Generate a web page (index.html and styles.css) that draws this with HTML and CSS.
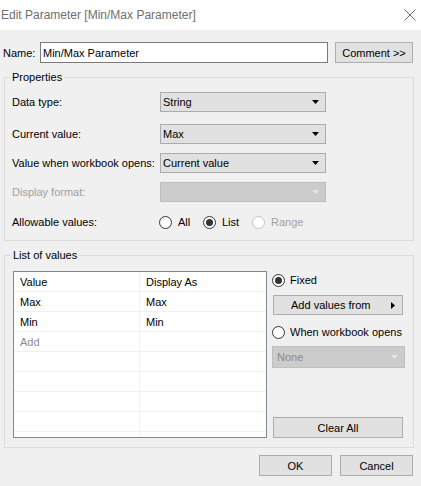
FILE: index.html
```html
<!DOCTYPE html>
<html lang="en">
<head>
<meta charset="utf-8">
<title>Edit Parameter</title>
<link rel="stylesheet" href="styles.css">
</head>
<body>
<div class="window">
  <div class="titlebar">
    <span class="title">Edit Parameter [Min/Max Parameter]</span>
    <svg class="close" width="12" height="12" viewBox="0 0 12 12"><path d="M0.5 0.5 L11.5 11.5 M11.5 0.5 L0.5 11.5" stroke="#6b6b6b" stroke-width="1" fill="none"/></svg>
  </div>
  <div class="content">
    <div class="name-row">
      <span class="name-label">Name:</span>
      <div class="text-input">Min/Max Parameter</div>
      <button class="btn comment">Comment &gt;&gt;</button>
    </div>

    <fieldset class="group props">
      <legend>Properties</legend>
      <div class="prop-list">
        <div class="prop-row">
          <span class="prop-label">Data type:</span>
          <div class="select"><span>String</span><svg width="7" height="4" viewBox="0 0 7 4"><polygon points="0,0 7,0 3.5,4" fill="#000"/></svg></div>
        </div>
        <div class="prop-row second">
          <span class="prop-label">Current value:</span>
          <div class="select"><span>Max</span><svg width="7" height="4" viewBox="0 0 7 4"><polygon points="0,0 7,0 3.5,4" fill="#000"/></svg></div>
        </div>
        <div class="prop-row">
          <span class="prop-label">Value when workbook opens:</span>
          <div class="select"><span>Current value</span><svg width="7" height="4" viewBox="0 0 7 4"><polygon points="0,0 7,0 3.5,4" fill="#000"/></svg></div>
        </div>
        <div class="prop-row">
          <span class="prop-label disabled">Display format:</span>
          <div class="select off"><span></span><svg width="7" height="4" viewBox="0 0 7 4"><polygon points="0,0 7,0 3.5,4" fill="#e6e6e6"/></svg></div>
        </div>
        <div class="prop-row last">
          <span class="prop-label">Allowable values:</span>
          <div class="radios">
            <span class="opt opt-all"><span class="radio"></span>All</span>
            <span class="opt opt-list"><span class="radio on"></span>List</span>
            <span class="opt disabled"><span class="radio off"></span>Range</span>
          </div>
        </div>
      </div>
    </fieldset>

    <fieldset class="group values">
      <legend>List of values</legend>
      <div class="values-body">
        <div class="grid">
          <div class="cell">Value</div><div class="cell">Display As</div>
          <div class="cell">Max</div><div class="cell">Max</div>
          <div class="cell">Min</div><div class="cell">Min</div>
          <div class="cell add">Add</div><div class="cell"></div>
          <div class="cell"></div><div class="cell"></div>
          <div class="cell"></div><div class="cell"></div>
          <div class="cell"></div><div class="cell"></div>
          <div class="cell"></div><div class="cell"></div>
          <div class="cell"></div><div class="cell"></div>
        </div>
        <div class="side">
          <span class="opt side-opt"><span class="radio on"></span>Fixed</span>
          <button class="btn side-btn addfrom"><span>Add values from</span><svg width="4" height="7" viewBox="0 0 4 7"><polygon points="0,0 4,3.5 0,7" fill="#000"/></svg></button>
          <span class="opt side-opt when"><span class="radio"></span>When workbook opens</span>
          <div class="select off none"><span>None</span><svg width="7" height="4" viewBox="0 0 7 4"><polygon points="0,0 7,0 3.5,4" fill="#e6e6e6"/></svg></div>
          <button class="btn side-btn clear">Clear All</button>
        </div>
      </div>
    </fieldset>

    <div class="footer">
      <button class="btn foot">OK</button>
      <button class="btn foot">Cancel</button>
    </div>
  </div>
</div>
</body>
</html>
```

FILE: styles.css
```css
* { box-sizing: border-box; }
html, body {
  margin: 0;
  padding: 0;
  background: #f0f0f0;
}
body {
  font-family: "Liberation Sans", Arial, sans-serif;
  font-size: 11px;
  color: #000;
}
.window {
  width: 421px;
  height: 486px;
  background: #f0f0f0;
  overflow: hidden;
}
.titlebar {
  height: 30px;
  background: #fff;
  display: flex;
  align-items: center;
  justify-content: space-between;
  padding: 0 5px 0 1px;
}
.title {
  font-size: 12px;
  color: #6f6f6f;
}
.close { display: block; margin-top: -1px; }

.name-row {
  display: flex;
  align-items: center;
  margin-top: 12px;
  height: 21px;
}
.name-label {
  width: 40px;
  padding-left: 3px;
}
.text-input {
  width: 288px;
  height: 21px;
  background: #fff;
  border: 1px solid #7a7a7a;
  padding-left: 2px;
  display: flex;
  align-items: center;
}
.btn {
  font-family: inherit;
  font-size: 11px;
  color: #000;
  background: #e1e1e1;
  border: 1px solid #adadad;
  border-radius: 0;
  padding: 0;
  margin: 0;
  display: flex;
  align-items: center;
  justify-content: center;
}
.comment {
  width: 78px;
  height: 21px;
  margin-left: 7px;
}

.group {
  margin: 7px 0 0 4px;
  width: 410px;
  border: 1px solid #dcdcdc;
  min-width: 0;
}
.group legend {
  line-height: 14px;
  padding: 0 2px;
  margin-left: -2px;
}
.props {
  padding: 8px 8px 8px 7px;
}
.prop-list {
  display: flex;
  flex-direction: column;
  gap: 9px;
}
.prop-row {
  display: flex;
  align-items: center;
  height: 20px;
}
.prop-row.second { margin-top: 3px; }
.prop-row.last { margin-top: 1px; }
.prop-label {
  width: 148px;
}
.disabled { color: #a0a0a0; }
.select {
  width: 166px;
  height: 20px;
  background: #e1e1e1;
  border: 1px solid #acacac;
  display: flex;
  align-items: center;
  justify-content: space-between;
  padding: 0 6px 0 2px;
}
.select svg { display: block; }
.select.off {
  background: #cccccc;
  border-color: #bfbfbf;
  color: #8a8a8a;
}
.radios {
  display: flex;
  align-items: center;
  margin-left: -1px;
}
.opt {
  display: flex;
  align-items: center;
  gap: 6px;
}
.opt-all { width: 44px; }
.opt-list { width: 49px; }
.radio {
  width: 13px;
  height: 13px;
  border-radius: 50%;
  border: 1px solid #333;
  background: #fff;
  display: inline-flex;
  align-items: center;
  justify-content: center;
  flex: none;
}
.radio.on::after {
  content: "";
  width: 7px;
  height: 7px;
  border-radius: 50%;
  background: #333;
}
.radio.off { border-color: #c2c2c2; }

.values {
  padding: 9px 8px 9px 8px;
}
.values-body {
  display: flex;
  gap: 5px;
}
.grid {
  width: 254px;
  height: 167px;
  background: #fff;
  border: 1px solid #828790;
  display: grid;
  grid-template-columns: 126px 1fr;
  grid-auto-rows: 20px;
  overflow: hidden;
}
.cell {
  border-bottom: 1px solid #f0f0f0;
  padding-left: 6px;
  display: flex;
  align-items: center;
}
.cell:nth-child(odd) { border-right: 1px solid #f0f0f0; }
.cell.add { color: #8c8c8c; }
.side {
  width: 133px;
  height: 167px;
  display: flex;
  flex-direction: column;
}
.side-opt {
  height: 18px;
  gap: 5px;
}
.side-btn {
  width: 130px;
  margin-left: 1px;
}
.addfrom {
  height: 20px;
  margin-top: 6px;
  justify-content: space-between;
  padding: 0 7px 0 17px;
}
.addfrom svg { display: block; }
.when { margin-top: 8px; }
.none {
  width: 133px;
  height: 22px;
  margin-top: 5px;
  padding-left: 4px;
}
.clear {
  height: 21px;
  margin-top: auto;
}

.footer {
  display: flex;
  justify-content: flex-end;
  gap: 8px;
  padding-right: 8px;
  margin-top: 7px;
}
.foot {
  width: 73px;
  height: 21px;
}
```
